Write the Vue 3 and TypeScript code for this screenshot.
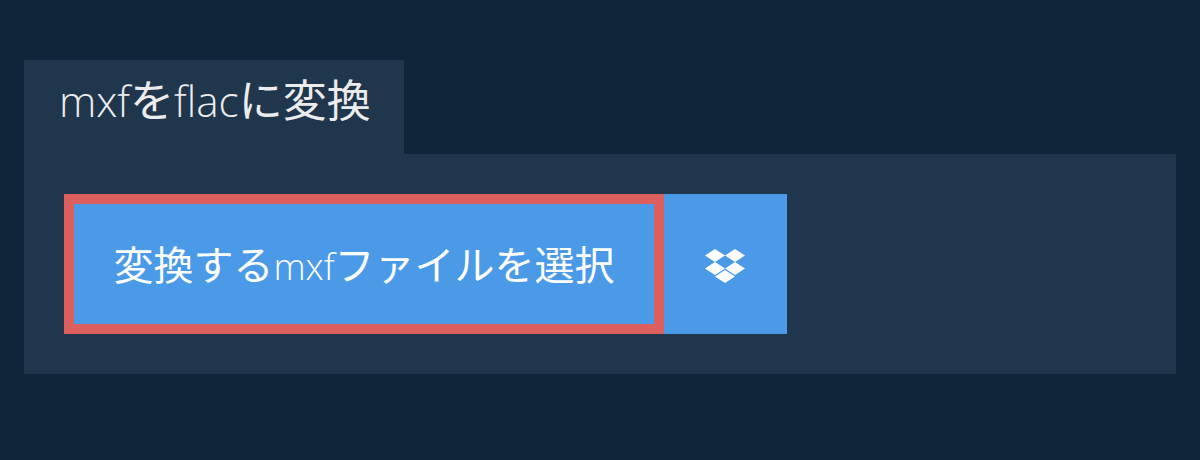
<script setup lang="ts">
const source = 'mxf'
const target = 'flac'
</script>

<template>
  <div class="page">
    <h1 class="tab"><span class="latin">{{ source }}</span>を<span class="latin">{{ target }}</span>に変換</h1>
    <div class="panel">
      <button class="pick">変換する<span class="latin">{{ source }}</span>ファイルを選択</button>
      <button class="dropbox" aria-label="Dropbox">
        <svg width="40" height="34" viewBox="0 0 40 34" fill="#fff">
          <polygon points="10,0 20,6.5 10,13 0,6.5" />
          <polygon points="30,0 40,6.5 30,13 20,6.5" />
          <polygon points="10,13 20,19.5 10,26 0,19.5" />
          <polygon points="30,13 40,19.5 30,26 20,19.5" />
          <polygon points="20,21 30,27.5 20,34 10,27.5" />
        </svg>
      </button>
    </div>
  </div>
</template>

<style>
html, body {
  margin: 0;
  background: #0f2539;
}
</style>

<style scoped>
.page {
  height: 460px;
  box-sizing: border-box;
  padding: 60px 24px 0;
  background: #0f2539;
  font-family: "Open Sans", "Noto Sans CJK JP", sans-serif;
}

.tab {
  width: 380px;
  height: 94px;
  box-sizing: border-box;
  margin: 0;
  padding: 10px 0 0 35px;
  background: #20364d;
  color: #ececec;
  font-size: 44px;
  font-weight: 400;
  line-height: 60px;
}

.latin {
  font-size: 0.91em;
  font-weight: 300;
}

.tab .latin {
  font-size: 0.96em;
}

.panel {
  display: flex;
  height: 220px;
  box-sizing: border-box;
  padding: 40px;
  background: #20364d;
}

button {
  border: 0;
  margin: 0;
  color: #fff;
  background: #4b9ae8;
  font-family: inherit;
  cursor: pointer;
}

.pick {
  width: 600px;
  height: 140px;
  padding: 0 0 2px;
  border: 10px solid #dd5f5d;
  font-size: 40px;
  font-weight: 400;
}

.dropbox {
  display: flex;
  align-items: center;
  justify-content: center;
  width: 123px;
  height: 140px;
  padding: 4px 1px 0 0;
}
</style>
